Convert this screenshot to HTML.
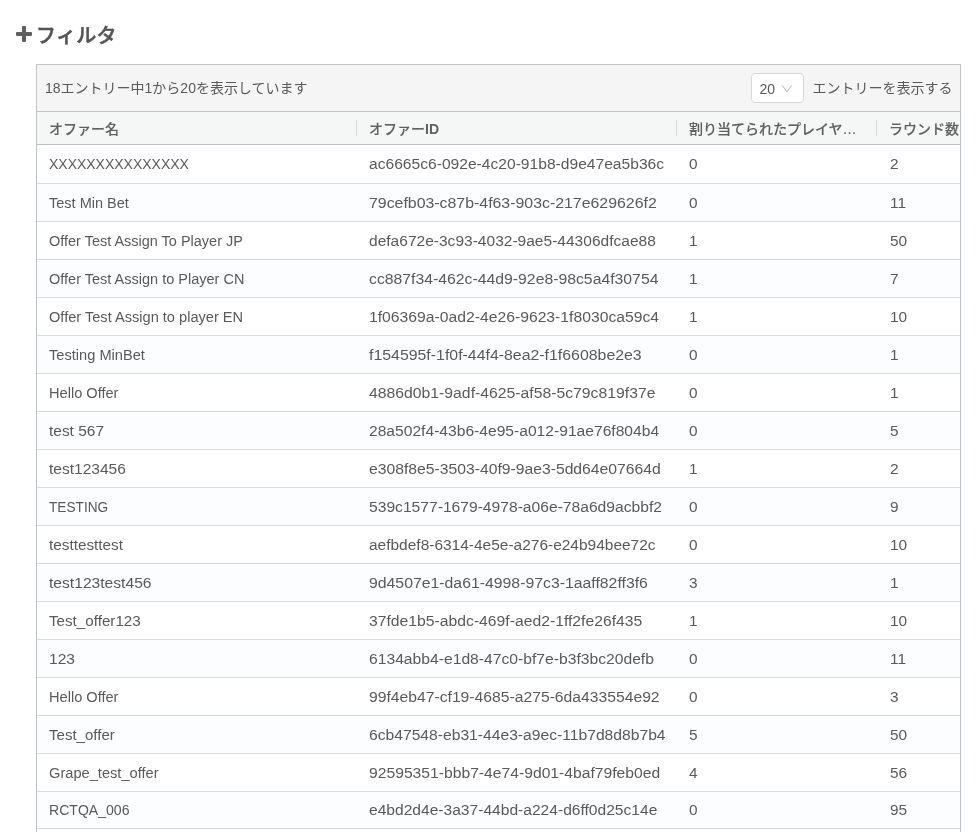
<!DOCTYPE html>
<html lang="ja">
<head>
<meta charset="utf-8">
<title>フィルタ</title>
<style>
html,body{margin:0;padding:0;background:#fff;}
.title,.panel{will-change:transform;}
body{width:976px;height:832px;overflow:hidden;position:relative;font-family:"Liberation Sans","Noto Sans CJK JP",sans-serif;font-size:14px;color:#5a5a5a;}
.title{position:absolute;left:16px;top:19px;height:32px;line-height:32px;white-space:nowrap;}
.title svg{position:absolute;left:0;top:7px;}
.title span{position:absolute;left:20px;top:0.5px;font-size:20px;font-weight:500;color:#555;-webkit-text-stroke:0.5px #555;letter-spacing:0.3px;}
.panel{position:absolute;left:36px;top:64px;width:925px;height:790px;background:#fff;overflow:hidden;}
.bar{position:absolute;left:0;top:0;width:925px;height:47px;box-sizing:border-box;border:1px solid #c4c4c4;border-bottom:0;background:#f5f5f5;}
.info{position:absolute;left:8px;top:0;line-height:46px;white-space:nowrap;color:#5a5a5a;}
.sel{position:absolute;left:714px;top:8px;width:53px;height:30px;box-sizing:border-box;border:1px solid #d9d9d9;border-radius:4px;background:#fff;}
.sel span{position:absolute;left:7.5px;top:0;line-height:30px;color:#5a5a5a;}
.sel svg{position:absolute;left:29px;top:10px;}
.lbl{position:absolute;left:775.5px;top:0;line-height:46px;white-space:nowrap;color:#5a5a5a;}
.grid{position:absolute;left:0;top:47px;width:925px;height:760px;box-sizing:border-box;border:1px solid #bdc3c7;overflow:hidden;}
.hdr{position:absolute;left:0;top:0;width:1400px;height:32px;background:#f5f7f7;border-bottom:1px solid #bdc3c7;}
.hc{position:absolute;top:0;height:32px;line-height:34px;font-weight:500;color:#616161;-webkit-text-stroke:0.12px #616161;white-space:nowrap;overflow:hidden;text-overflow:ellipsis;box-sizing:border-box;padding:0 12px;}
.hc b{font-weight:700;-webkit-text-stroke:0;}
.hs{position:absolute;top:8px;width:1px;height:16px;background:#d4d8db;}
.row{position:absolute;left:0;width:1400px;height:38px;box-sizing:border-box;border-bottom:1px solid #d9dcde;background:#fff;}
.row.o{background:#fcfdfe;}
.c{position:absolute;top:0;transform-origin:0 50%;height:37px;line-height:39px;white-space:nowrap;}
.r0 .c{line-height:37px;}
.row.rl{height:37px;}
.rl .c{line-height:37px;}
.c1{left:12px;}.c2{left:332px;}.c3{left:652px;transform:scaleX(1.1);}.c4{left:852.5px;transform:scaleX(1.1);}
</style>
</head>
<body>
<div class="title"><svg width="16" height="16" viewBox="0 0 16 16"><rect x="6" y="0" width="4" height="16" rx="1.1" fill="#5f5f5f"/><rect x="0" y="6" width="16" height="4" rx="1.1" fill="#5f5f5f"/></svg><span>フィルタ</span></div>
<div class="panel">
<div class="bar">
<div class="info">18エントリー中1から20を表示しています</div>
<div class="sel"><span>20</span><svg width="12" height="12" viewBox="0 0 12 12"><path d="M1.3 1.5L6 7.8L10.7 1.5" stroke="#b9b9b9" stroke-width="1" fill="none"/></svg></div>
<div class="lbl">エントリーを表示する</div>
</div>
<div class="grid">
<div class="hdr">
<div class="hc" style="left:0;width:320px">オファー名</div>
<div class="hc" style="left:320px;width:320px">オファー<b>ID</b></div>
<div class="hc" style="left:640px;width:200px;padding-right:18px">割り当てられたプレイヤー数</div>
<div class="hc" style="left:840px;width:200px">ラウンド数</div>
<div class="hs" style="left:319px"></div><div class="hs" style="left:639px"></div><div class="hs" style="left:839px"></div>
</div>
<div class="row r0" style="top:34px"><div class="c c1" style="transform:scaleX(0.9986)">XXXXXXXXXXXXXXX</div><div class="c c2" style="transform:scaleX(1.1149)">ac6665c6-092e-4c20-91b8-d9e47ea5b36c</div><div class="c c3">0</div><div class="c c4">2</div></div>
<div class="row o" style="top:72px"><div class="c c1" style="transform:scaleX(1.0365)">Test Min Bet</div><div class="c c2" style="transform:scaleX(1.1338)">79cefb03-c87b-4f63-903c-217e629626f2</div><div class="c c3">0</div><div class="c c4">11</div></div>
<div class="row" style="top:110px"><div class="c c1" style="transform:scaleX(1.0337)">Offer Test Assign To Player JP</div><div class="c c2" style="transform:scaleX(1.1098)">defa672e-3c93-4032-9ae5-44306dfcae88</div><div class="c c3">1</div><div class="c c4">50</div></div>
<div class="row o" style="top:148px"><div class="c c1" style="transform:scaleX(1.0362)">Offer Test Assign to Player CN</div><div class="c c2" style="transform:scaleX(1.1268)">cc887f34-462c-44d9-92e8-98c5a4f30754</div><div class="c c3">1</div><div class="c c4">7</div></div>
<div class="row" style="top:186px"><div class="c c1" style="transform:scaleX(1.0422)">Offer Test Assign to player EN</div><div class="c c2" style="transform:scaleX(1.1224)">1f06369a-0ad2-4e26-9623-1f8030ca59c4</div><div class="c c3">1</div><div class="c c4">10</div></div>
<div class="row o" style="top:224px"><div class="c c1" style="transform:scaleX(1.0442)">Testing MinBet</div><div class="c c2" style="transform:scaleX(1.1337)">f154595f-1f0f-44f4-8ea2-f1f6608be2e3</div><div class="c c3">0</div><div class="c c4">1</div></div>
<div class="row" style="top:262px"><div class="c c1" style="transform:scaleX(1.0420)">Hello Offer</div><div class="c c2" style="transform:scaleX(1.1253)">4886d0b1-9adf-4625-af58-5c79c819f37e</div><div class="c c3">0</div><div class="c c4">1</div></div>
<div class="row o" style="top:300px"><div class="c c1" style="transform:scaleX(1.1037)">test 567</div><div class="c c2" style="transform:scaleX(1.1157)">28a502f4-43b6-4e95-a012-91ae76f804b4</div><div class="c c3">0</div><div class="c c4">5</div></div>
<div class="row" style="top:338px"><div class="c c1" style="transform:scaleX(1.1099)">test123456</div><div class="c c2" style="transform:scaleX(1.1220)">e308f8e5-3503-40f9-9ae3-5dd64e07664d</div><div class="c c3">1</div><div class="c c4">2</div></div>
<div class="row o" style="top:376px"><div class="c c1" style="transform:scaleX(0.9757)">TESTING</div><div class="c c2" style="transform:scaleX(1.1167)">539c1577-1679-4978-a06e-78a6d9acbbf2</div><div class="c c3">0</div><div class="c c4">9</div></div>
<div class="row" style="top:414px"><div class="c c1" style="transform:scaleX(1.0931)">testtesttest</div><div class="c c2" style="transform:scaleX(1.1055)">aefbdef8-6314-4e5e-a276-e24b94bee72c</div><div class="c c3">0</div><div class="c c4">10</div></div>
<div class="row o" style="top:452px"><div class="c c1" style="transform:scaleX(1.1163)">test123test456</div><div class="c c2" style="transform:scaleX(1.1289)">9d4507e1-da61-4998-97c3-1aaff82ff3f6</div><div class="c c3">3</div><div class="c c4">1</div></div>
<div class="row" style="top:490px"><div class="c c1" style="transform:scaleX(1.0842)">Test_offer123</div><div class="c c2" style="transform:scaleX(1.1228)">37fde1b5-abdc-469f-aed2-1ff2fe26f435</div><div class="c c3">1</div><div class="c c4">10</div></div>
<div class="row o" style="top:528px"><div class="c c1" style="transform:scaleX(1.1123)">123</div><div class="c c2" style="transform:scaleX(1.1194)">6134abb4-e1d8-47c0-bf7e-b3f3bc20defb</div><div class="c c3">0</div><div class="c c4">11</div></div>
<div class="row" style="top:566px"><div class="c c1" style="transform:scaleX(1.0420)">Hello Offer</div><div class="c c2" style="transform:scaleX(1.1210)">99f4eb47-cf19-4685-a275-6da433554e92</div><div class="c c3">0</div><div class="c c4">3</div></div>
<div class="row o" style="top:604px"><div class="c c1" style="transform:scaleX(1.0750)">Test_offer</div><div class="c c2" style="transform:scaleX(1.1182)">6cb47548-eb31-44e3-a9ec-11b7d8d8b7b4</div><div class="c c3">5</div><div class="c c4">50</div></div>
<div class="row" style="top:642px"><div class="c c1" style="transform:scaleX(1.0458)">Grape_test_offer</div><div class="c c2" style="transform:scaleX(1.1200)">92595351-bbb7-4e74-9d01-4baf79feb0ed</div><div class="c c3">4</div><div class="c c4">56</div></div>
<div class="row o rl" style="top:680px"><div class="c c1" style="transform:scaleX(1.0038)">RCTQA_006</div><div class="c c2" style="transform:scaleX(1.1133)">e4bd2d4e-3a37-44bd-a224-d6ff0d25c14e</div><div class="c c3">0</div><div class="c c4">95</div></div>
</div>
</div>
</body>
</html>
